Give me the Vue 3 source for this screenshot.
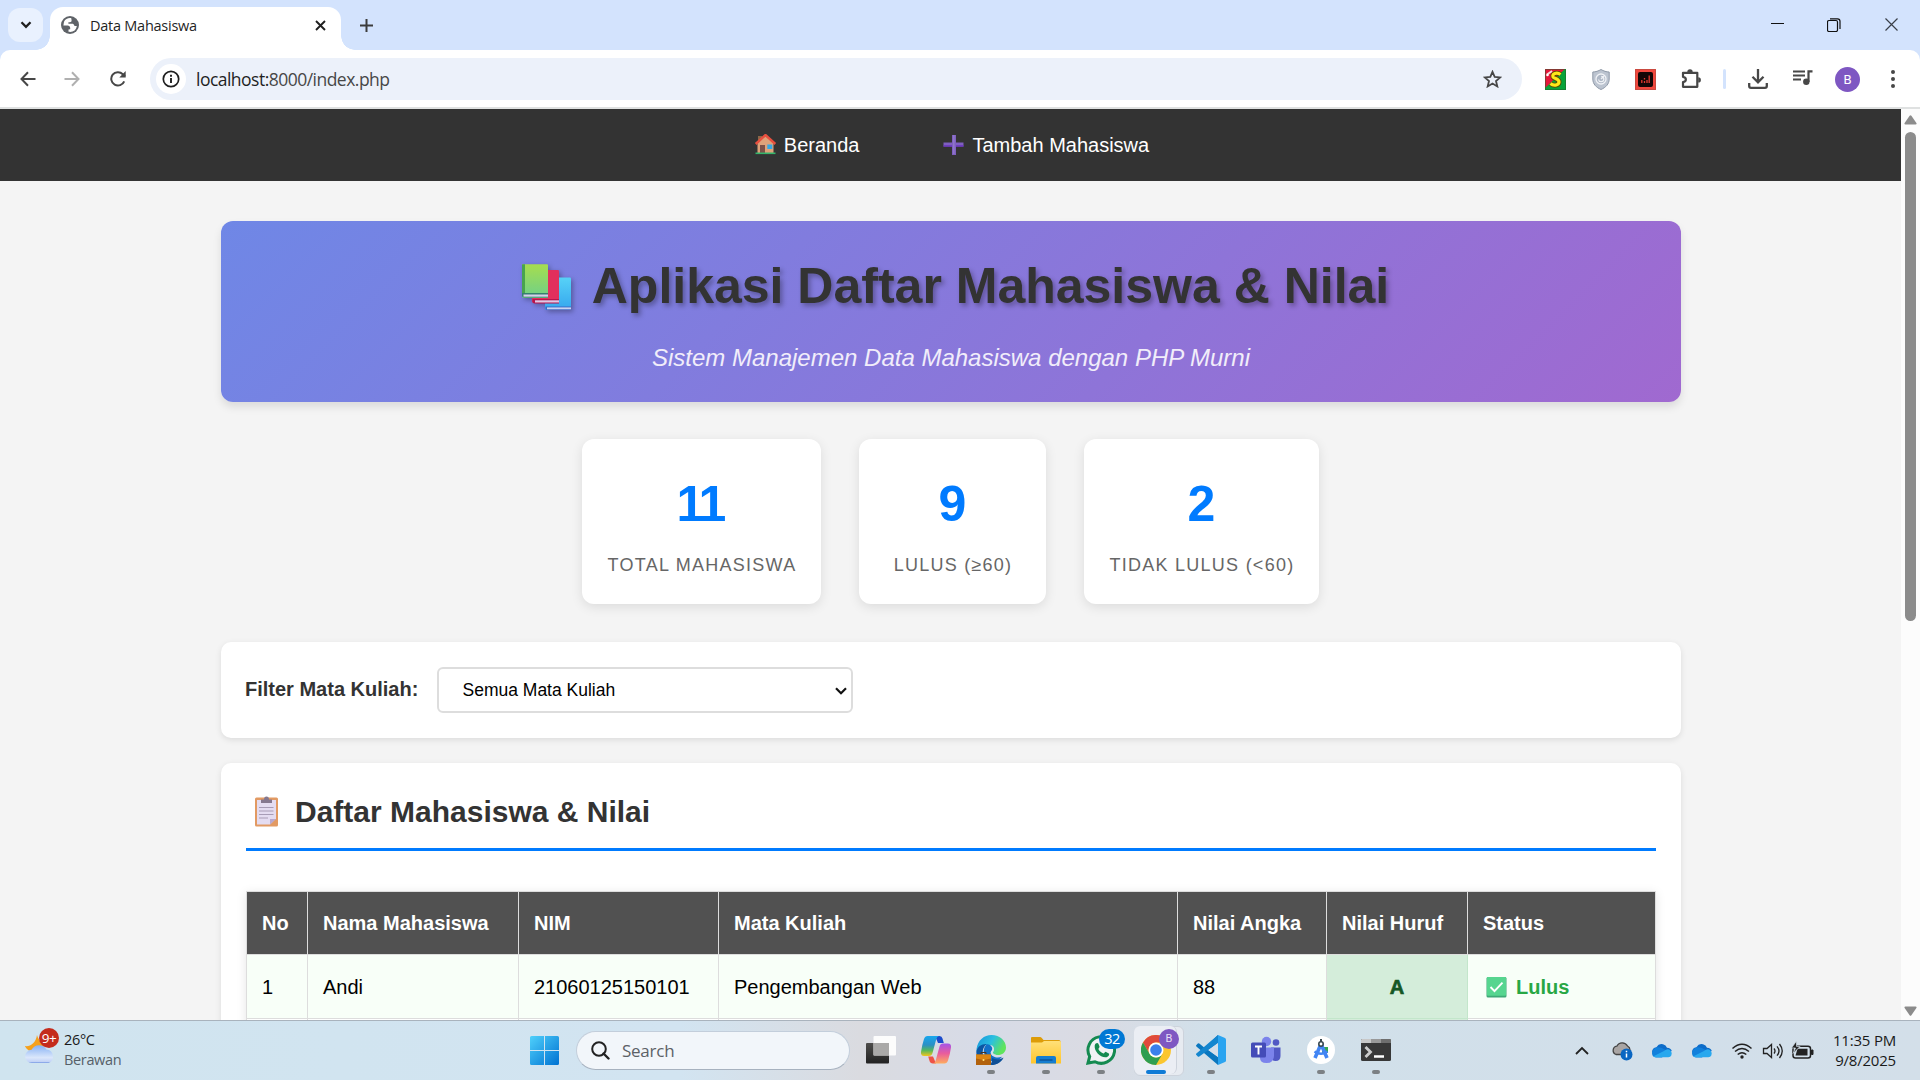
<script setup>
import { ref } from 'vue'

const columns = ['No', 'Nama Mahasiswa', 'NIM', 'Mata Kuliah', 'Nilai Angka', 'Nilai Huruf', 'Status']
const rows = [{ no: 1, nama: 'Andi', nim: '21060125150101', mk: 'Pengembangan Web', angka: 88, huruf: 'A', status: 'Lulus' }]
const stats = [
  { value: 11, label: 'Total Mahasiswa', width: 239 },
  { value: 9, label: 'Lulus (≥60)', width: 187 },
  { value: 2, label: 'Tidak Lulus (<60)', width: 235 },
]
const filter = ref('')
</script>

<template>
  <div class="desktop">
    <header class="tabstrip">
      <button class="tab-search">
        <svg width="12" height="8" viewBox="0 0 12 8"><path d="M1.5 1.3 6 5.8l4.500-4.500" fill="none" stroke="#1f1f1f" stroke-width="2.300" /></svg>
      </button>
      <div class="tab">
        <svg class="globe" width="18" height="18" viewBox="0 0 18 18">
          <circle cx="9" cy="9" r="9" fill="#5f6368" />
          <path d="M10.300 2.200C7.500 1.600 4.300 3 3 5.700l-.6 3.800h4.200c1.500 0 2.600 1 2.600 2.400v1.300l-1.700.2v2.400c4.200.8 7.800-1.500 8.300-5.800h-2.300c-.4-1.600-1.300-2.200-2.700-2.200H7.400V6.200h1.500c1.200 0 1.700-.6 1.700-1.700z" fill="#fff" />
        </svg>
        <span class="tab-title">Data Mahasiswa</span>
        <svg class="tab-close" width="11" height="11" viewBox="0 0 11 11"><path d="M1 1l9 9M10 1l-9 9" stroke="#1f1f1f" stroke-width="1.900" /></svg>
      </div>
      <svg class="new-tab" width="13" height="13" viewBox="0 0 13 13"><path d="M6.500 0v13M0 6.500h13" stroke="#3c3c3c" stroke-width="2" /></svg>
      <div class="win-buttons">
        <svg width="13" height="13" viewBox="0 0 13 13"><path d="M0 5.500h13" stroke="#111" /></svg>
        <svg width="14" height="14" viewBox="0 0 14 14" fill="none" stroke="#111"><rect x=".5" y="2.500" width="10" height="11" rx="1.500" stroke-width="1.200" /><path d="M3 .8h7.500q2.500 0 2.500 2.500V11" stroke-width="1.200" /></svg>
        <svg width="13" height="13" viewBox="0 0 13 13"><path d="M.5.5l12 12M12.500.5l-12 12" stroke="#3a3f48" stroke-width="1.200" /></svg>
      </div>
    </header>

    <div class="toolbar">
      <div class="nav-btn"><svg width="16" height="16" viewBox="0 0 16 16" fill="none" stroke="#474747" stroke-width="2"><path d="M15.500 8H2M8 1.300 1.500 8 8 14.700" /></svg></div>
      <div class="nav-btn"><svg width="16" height="16" viewBox="0 0 16 16" fill="none" stroke="#b0b0b0" stroke-width="2"><path d="M.5 8H14M8 1.300 14.500 8 8 14.700" /></svg></div>
      <div class="nav-btn reload"><svg width="16" height="16" viewBox="0 0 16 16"><path d="M14.200 10.300A6.700 6.700 0 1 1 12.800 3.200L15 5.400" fill="none" stroke="#474747" stroke-width="2" /><path d="M15.700 0v6.500H9.300z" fill="#474747" /></svg></div>
      <div class="omnibox">
        <span class="site-info">
          <svg width="18" height="18" viewBox="0 0 18 18"><circle cx="9" cy="9" r="7.700" fill="none" stroke="#1f1f1f" stroke-width="1.700" /><path d="M9 8v5M9 4.800v1.900" stroke="#1f1f1f" stroke-width="1.900" /></svg>
        </span>
        <span class="url"><b>localhost:</b>8000/index.php</span>
        <svg class="star" width="19" height="18" viewBox="0 0 19 18"><path d="M9.500 1.800l2.200 5.100 5.500.5-4.200 3.600 1.300 5.400-4.800-2.900-4.800 2.900L6 11 1.800 7.400l5.500-.5z" fill="none" stroke="#474747" stroke-width="1.800" /></svg>
      </div>
      <div class="ext">
        <svg width="21" height="21" viewBox="0 0 21 21">
          <path d="M0 0h21v21H0z" fill="#08a33a" /><path d="M0 0h20L0 19z" fill="#e5173a" />
          <path d="M15.500 5.500C12 3 6.800 4.500 8 7.800c.8 2 6.500 2 6 5.500-.4 3-5.500 4-8.500 1.200" fill="none" stroke="#5b4b00" stroke-width="5" />
          <path d="M15.500 5.500C12 3 6.800 4.500 8 7.800c.8 2 6.500 2 6 5.500-.4 3-5.500 4-8.500 1.200" fill="none" stroke="#ffe81a" stroke-width="3.200" />
          <path d="M2 5.500l5-3.500" stroke="#f3dede" stroke-width="2" /><circle cx="2.500" cy="6" r="1.300" fill="#fff" />
          <path d="M.5.500h20v20H.5z" fill="none" stroke="#245c2b" stroke-opacity=".5" />
        </svg>
      </div>
      <div class="ext">
        <svg width="18" height="21" viewBox="0 0 18 21">
          <path d="M9 .5C6.500 2 3.500 3 .8 3v7c0 5 3.500 8.500 8.200 10.500 4.700-2 8.200-5.500 8.200-10.500V3C14.500 3 11.500 2 9 .5z" fill="#bcc4d0" stroke="#8f99a8" />
          <circle cx="9" cy="10" r="5" fill="#aeb7c5" stroke="#f0f2f6" stroke-width="1.300" /><path d="M6.500 10.500a2.700 2.700 0 1 0 2.700-3.200M9 10l3-3" stroke="#eef1f5" fill="none" stroke-width="1.300" />
        </svg>
      </div>
      <div class="ext">
        <svg width="21" height="21" viewBox="0 0 21 21"><path d="M0 0h21v21H0z" fill="#f0483e" /><path d="M.5.5h20v20H.5z" fill="none" stroke="#c94a40" /><rect x="3" y="3" width="15" height="15" rx="2" fill="#120606" /><path d="M6.800 11v3M9.500 12v2M9.500 9v1.500M12 11v3M14.200 6.500V14" stroke="#e0392f" stroke-width="1.300" /></svg>
      </div>
      <div class="ext puzzle">
        <svg width="21" height="21" viewBox="0 0 21 21"><path d="M2 3.800h14.300v14H2v-4.600c3.800-.6 3.800-4.800 0-5.400z" fill="none" stroke="#474747" stroke-width="2.200" stroke-linejoin="round" /><path d="M6.300 3a2.700 2.700 0 0 1 5.400 0zM17.200 8.200a2.700 2.700 0 0 1 0 5.400z" fill="#474747" /></svg>
      </div>
      <div class="divider"><i></i></div>
      <div class="ext"><svg width="20" height="20" viewBox="0 0 20 20" fill="none" stroke="#474747" stroke-width="2.300"><path d="M10 0v13M4.500 7.800l5.500 5.500 5.500-5.500M1.200 14v3q0 1.800 1.800 1.800h14q1.800 0 1.800-1.800v-3" /></svg></div>
      <div class="ext queue"><svg width="20" height="15" viewBox="0 0 20 15"><path d="M0 1.500h12M0 5.500h12M0 9.500h8" stroke="#474747" stroke-width="2" /><path d="M15.500 12V1.300h4" stroke="#474747" stroke-width="2.200" fill="none" /><circle cx="13.300" cy="11.700" r="3.200" fill="#474747" /></svg></div>
      <div class="ext"><span class="avatar">B</span></div>
      <div class="ext"><svg width="4" height="18" viewBox="0 0 4 18" fill="#474747"><circle cx="2" cy="2" r="2" /><circle cx="2" cy="9" r="2" /><circle cx="2" cy="16" r="2" /></svg></div>
    </div>

    <div class="viewport">
      <div class="page">
        <nav class="menu">
          <a>
            <svg width="27" height="22" viewBox="0 0 27 22">
              <path d="M6 2h4v6H6z" fill="#8b6648" /><path d="M5.500 9 13.500 2l8 7v10.500h-16z" fill="#dfa27a" />
              <path d="M3.700 10 13.500 1l9.800 9" fill="none" stroke="#e8503f" stroke-width="2.400" />
              <path d="M8 11h5v8.500H8z" fill="#7d5148" /><path d="M15.300 10.500h5V15h-5z" fill="#35a7e4" /><path d="M3.500 18.500h20v1.600h-20z" fill="#35b56c" />
            </svg>Beranda</a>
          <a>
            <svg width="27" height="22" viewBox="0 0 27 22">
              <path d="M12 1h4v7.500h7.500v4H16V21h-4v-8.500H3.500v-4H12z" fill="#7f5fc0" /><path d="M3.500 11.200H12v1.500H3.500zM16 11.200h7.500v1.500H16z" fill="#6a35bd" /><path d="M13 1h1.600v19H13z" fill="#9a86cf" opacity=".6" />
            </svg>Tambah Mahasiswa</a>
        </nav>
        <main>
          <section class="hero">
            <h1>
              <svg width="65" height="56" viewBox="0 0 65 56">
                <defs>
                  <linearGradient id="bookG" x2="0" y2="1"><stop stop-color="#a6dd4e" /><stop offset="1" stop-color="#6ed08a" /></linearGradient>
                  <linearGradient id="bookB" x2="0" y2="1"><stop stop-color="#57d2f7" /><stop offset="1" stop-color="#35a6ee" /></linearGradient>
                </defs>
                <path d="M32 16.500h25q1 0 1 1V49H34q-2 0-2-2z" fill="url(#bookB)" /><path d="M32.500 45.500H58V49H34.500q-2 0-2-1.500z" fill="#3c67c4" /><path d="M34 46.400h24v1.900H34z" fill="#c9d3f2" />
                <path d="M20 9h25q1 0 1 1v32H21q-2 0-2-2z" fill="#e22f5c" /><path d="M19.500 38H46v4.500H21.500q-2 0-2-2z" fill="#b9134a" /><path d="M22 39.300h24v2.200H22z" fill="#dfc8e6" />
                <path d="M9 4q0-.7.700-.7H34q1 0 1 1V37H11q-2 0-2-2z" fill="url(#bookG)" /><path d="M9 4q0-.7.700-.7H12V33L9 35z" fill="#48a34e" /><path d="M9 32h26v4.500H11q-2 0-2-2z" fill="#36806f" /><path d="M10.500 33.500H35v2.200H10.500z" fill="#d6cfea" />
              </svg><span>Aplikasi Daftar Mahasiswa &amp; Nilai</span>
            </h1>
            <p>Sistem Manajemen Data Mahasiswa dengan PHP Murni</p>
          </section>

          <section class="stats">
            <div v-for="s in stats" :key="s.label" class="stat" :style="{ width: s.width + 'px' }">
              <strong :class="{ ones: s.value === 11 }">{{ s.value }}</strong>
              <span>{{ s.label }}</span>
            </div>
          </section>

          <section class="filter">
            <label>Filter Mata Kuliah:</label>
            <div class="select-wrap">
              <select v-model="filter"><option value="">Semua Mata Kuliah</option></select>
              <svg width="12" height="8" viewBox="0 0 12 8"><path d="M1 1.200 6 6.200l5-5" fill="none" stroke="#111" stroke-width="2.200" /></svg>
            </div>
          </section>

          <section class="list">
            <h2>
              <svg width="49" height="34" viewBox="0 0 49 34">
                <rect x="9" y="2.500" width="23" height="29" rx="1.500" fill="#e29a63" />
                <path d="M11 5h19v18.500L24 29.500H11z" fill="#e4dcf1" /><path d="M24 29.500V24h6z" fill="#b9a8cf" />
                <path d="M15 4.500h3q0-3 2.500-3T23 4.500h3V8H15z" fill="#85788f" />
                <path d="M13 12.500h14.500M13 16h14.500M13 19.500h14.500M13 23h9" stroke="#a79cb6" stroke-width="1.200" />
              </svg>Daftar Mahasiswa &amp; Nilai
            </h2>
            <table>
              <colgroup><col class="c1"><col class="c2"><col class="c3"><col class="c4"><col class="c5"><col class="c6"><col class="c7"></colgroup>
              <thead><tr><th v-for="c in columns" :key="c">{{ c }}</th></tr></thead>
              <tbody>
                <tr v-for="r in rows" :key="r.no">
                  <td>{{ r.no }}</td><td>{{ r.nama }}</td><td>{{ r.nim }}</td><td>{{ r.mk }}</td><td>{{ r.angka }}</td>
                  <td class="grade">{{ r.huruf }}</td>
                  <td class="pass">
                    <svg width="33" height="22" viewBox="0 0 33 22"><rect x="3.500" y="1" width="20" height="20.500" rx="1.500" fill="#3fa877" /><rect x="4" y="1" width="19" height="18.700" rx="1" fill="#56d58f" /><path d="M7.500 11l4 4.200 8-8.500" fill="none" stroke="#fff" stroke-width="1.900" /></svg>{{ r.status }}
                  </td>
                </tr>
                <tr class="next"><td v-for="n in 7" :key="n" :class="{ grade: n === 6 }"></td></tr>
              </tbody>
            </table>
          </section>
        </main>
      </div>
      <div class="scrollbar">
        <svg width="13" height="10" viewBox="0 0 13 10"><path d="M5.600.8q.9-1 1.800 0l5 7.200q.7 1.500-.9 1.500h-10Q0 9.500.6 8z" fill="#8b8b8b" /></svg>
        <i></i>
        <svg class="down" width="13" height="10" viewBox="0 0 13 10"><path d="M5.600 9.200q.9 1 1.800 0l5-7.200q.7-1.500-.9-1.500h-10Q0 .5.600 2z" fill="#8b8b8b" /></svg>
      </div>
    </div>

    <footer class="taskbar">
      <div class="weather">
        <div class="weather-icon">
          <svg width="30" height="30" viewBox="0 0 30 30">
            <defs><linearGradient id="cloud" x2="0" y2="1"><stop stop-color="#86b1f4" /><stop offset=".7" stop-color="#dbe7fb" /><stop offset=".92" stop-color="#c3d3f6" /><stop offset="1" stop-color="#6f93e2" /></linearGradient></defs>
            <path d="M12 1c1 4 4 8 9 9l-7 8C8 19 2 17 0 12c5 1 11-3 12-11z" fill="#f5a11c" />
            <path d="M7 29a6.500 6.500 0 0 1-.5-13.200A8.500 8.500 0 0 1 21.500 15.500a7 7 0 0 1 2 13.500z" fill="url(#cloud)" />
          </svg>
          <b>9+</b>
        </div>
        <div class="weather-text"><span>26°C</span><span>Berawan</span></div>
      </div>

      <div class="start">
        <svg width="29" height="29" viewBox="0 0 29 29">
          <defs><linearGradient id="win" x2="1" y2="1"><stop stop-color="#4fd0fb" /><stop offset="1" stop-color="#0072d2" /></linearGradient></defs>
          <path d="M1.500 0H14v14H0V1.500Q0 0 1.500 0zM15 0h12.500Q29 0 29 1.500V14H15zM0 15h14v14H1.500Q0 29 0 27.500zM15 15h14v12.500q0 1.500-1.500 1.500H15z" fill="url(#win)" />
        </svg>
      </div>
      <div class="search">
        <svg width="19" height="19" viewBox="0 0 19 19"><circle cx="8" cy="8" r="6.800" fill="none" stroke="#222" stroke-width="2" /><path d="M12.500 12.500l5 5" stroke="#222" stroke-width="2.400" stroke-linecap="round" /></svg>
        <span>Search</span>
      </div>

      <div class="apps">
        <div class="app">
          <svg width="30" height="30" viewBox="0 0 30 30"><defs><linearGradient id="tvd" x2="0" y2="1"><stop stop-color="#4e4d4b" /><stop offset="1" stop-color="#222" /></linearGradient></defs><rect x="0" y="8" width="23" height="20.500" rx="1" fill="url(#tvd)" /><rect x="7.500" y="1" width="22.500" height="19.500" rx="1" fill="#fff" opacity=".9" /><path d="M7.500 8H23v12.500H7.500z" fill="#aaa9a8" /></svg>
        </div>
        <div class="app">
          <svg width="30" height="28" viewBox="0 0 30 28">
            <defs>
              <linearGradient id="cpl" x2="0" y2="1"><stop stop-color="#18a7ee" /><stop offset=".45" stop-color="#2b8fc5" /><stop offset=".72" stop-color="#55b85c" /><stop offset="1" stop-color="#f2c51c" /></linearGradient>
              <linearGradient id="cpr" x2="0" y2="1"><stop stop-color="#a553e8" /><stop offset=".5" stop-color="#e95d9c" /><stop offset="1" stop-color="#ffac5e" /></linearGradient>
            </defs>
            <path d="M14 0h4.500q2.500 0 3 2.500L22.800 7H17z" fill="#1b4bcb" />
            <path d="M7.200 20.500H12l3 7h-3q-3 0-3.600-3z" fill="#ee5347" />
            <path d="M6.500 0H18q-2 .5-2.700 3l-3.800 14q-.8 3-3.500 3H3q-3.500 0-3-4Q1 9 3 3 4 0 6.500 0z" fill="url(#cpl)" />
            <path d="M23.500 27.500H12q2-.5 2.700-3l3.800-14q.8-3 3.500-3h5q3.500 0 3 4-1 7-3 13-1 3-3.500 3z" fill="url(#cpr)" />
          </svg>
        </div>
        <div class="app run">
          <svg width="30" height="30" viewBox="0 0 30 30">
            <defs><linearGradient id="edge" x2="1" y2=".4"><stop stop-color="#1592dc" /><stop offset=".55" stop-color="#2bbfe0" /><stop offset="1" stop-color="#5fe45c" /></linearGradient></defs>
            <path d="M.5 14C2 5 8 0 15.500 0 24 0 30 6 30 12.500c0 5-4 7.500-8 7.500-3.500 0-5.500-1.300-5-2.700 2.500-4 .5-7.300-3.500-7.300C8 9.500 3 11 .5 17z" fill="url(#edge)" />
            <path d="M.3 17C1 11.500 6 8.500 11 9c-3 2-5 6-4 10.500 1.200 5 6 8.500 12 8l8.500-4.500C25 27.500 20 30 15 30 6 30 0 24 .3 17z" fill="#0b57a4" />
            <path d="M11 9.300c2 0 5 1.200 5.300 4.500 0 2-1.600 2.500-1.300 4.500.3 3.500 6 5.500 11 3.500-3 4.500-9 6-13 3.500C7 21 6 13 11 9.300z" fill="#1270c8" />
            <path d="M17 12.500q1.500 3-.5 5 1.500 3 7 2.700l-2 1.300q-5.500 0-7-3.500.2-1.500 1.500-2.700z" fill="#d4dfea" />
            <path d="M16 23q6 3 11.500-.5Q24 29 16 30z" fill="#0f4f96" />
            <rect y="19.500" width="15" height="10.500" fill="#b2610c" /><path d="M0 19.500h15v4L7.500 25 0 23.500z" fill="#da8513" /><path d="M5 19v-1.500h5V19" stroke="#4b3520" fill="none" /><circle cx="7.500" cy="25" r="1" fill="#ffe177" />
          </svg>
        </div>
        <div class="app run">
          <svg width="30" height="28" viewBox="0 0 30 28">
            <defs><linearGradient id="fold" x2="0" y2="1"><stop stop-color="#ffe07a" /><stop offset="1" stop-color="#ffc52b" /></linearGradient></defs>
            <path d="M0 2q0-1 1-1h8q1 0 2 1.200L12.500 4H28q1.500 0 1.500 1.500V10H0z" fill="#dd9c09" /><path d="M0 6.500h11l2-1.500h15.500Q30 5 30 6.500V27.500H0z" fill="url(#fold)" /><path d="M5 27.500V22q0-2 2-2h16q2 0 2 2v5.500z" fill="#157dd0" /><path d="M8.500 24h13" stroke="#0b4e91" stroke-width="1.300" />
          </svg>
        </div>
        <div class="app run">
          <svg width="30" height="30" viewBox="0 0 30 30"><path d="M2 28l1.700-6.500A13.300 13.300 0 1 1 9 26.700z" fill="#f0f2f4" stroke="#148a50" stroke-width="3" /><path d="M8.700 10.500C9.500 7.500 12 7.500 12.500 9l1 2.500c.3 1-1.300 2-1 2.700 1 2 2.800 3.500 5 4.300.7.200 1.700-2 2.600-1.600l2.700 1.500c1 .6-.2 3.800-3.200 3.900C14 22.500 8 16 8.700 10.500z" fill="#148a50" /></svg>
          <b class="badge">32</b>
        </div>
        <div class="app run active">
          <div class="stack"></div>
          <svg width="30" height="30" viewBox="0 0 30 30"><circle cx="15" cy="15" r="15" fill="#fbc62f" /><path d="M2 7.500A15 15 0 0 1 28 7.500H15a7.500 7.500 0 0 0-6.500 11.200z" fill="#e04a3b" /><path d="M2 7.500l6.500 11.200a7.500 7.500 0 0 0 13 0L15 30A15 15 0 0 1 2 7.500z" fill="#2f9e50" /><circle cx="15" cy="15" r="7.500" fill="#fff" /><circle cx="15" cy="15" r="5.800" fill="#3b80ec" /></svg>
          <b class="profile">B</b>
        </div>
        <div class="app run">
          <svg width="30" height="30" viewBox="0 0 30 30"><path d="M22 0l7 3q1 .5 1 1.500v21q0 1-1 1.500l-7 3z" fill="#2aa4f0" /><path d="M22 0L8.500 12.700 3.300 8.600q-.8-.6-1.500 0L.4 10q-.8.800 0 1.500l21.600 18.500V22L12.300 15 22 8z" fill="#0a77bf" /><path d="M.4 18.500q-.8.700 0 1.500l1.400 1.400q.7.600 1.500 0L22 8V0z" fill="#1486cf" /><path d="M22 8v14l-9.700-7z" fill="#d4dfea" /></svg>
        </div>
        <div class="app">
          <svg width="30" height="28" viewBox="0 0 30 28"><circle cx="25" cy="6.500" r="3.300" fill="#5159c4" /><path d="M20 11.500h9.500V20q0 5-5 5-4 0-4.500-4z" fill="#5159c4" /><circle cx="15.500" cy="5.500" r="4.700" fill="#7b83eb" /><path d="M9 11.500h14V20q-.5 7-7.500 7T9 21z" fill="#7b83eb" /><rect y="6.500" width="15" height="15" rx="1.500" fill="#444cb8" /><path d="M4 10.500h7M7.500 10.500v8" stroke="#fff" stroke-width="1.900" /></svg>
        </div>
        <div class="app run">
          <svg width="30" height="30" viewBox="0 0 30 30"><circle cx="15" cy="15" r="14" fill="#fff" /><path d="M16 12h6v6h-6z" fill="#33a854" /><path d="M15 9 9 23M15 9l6 14" stroke="#4285f4" stroke-width="3.600" /><path d="M8.500 16.500q6.500 4.500 13 0" stroke="#4285f4" stroke-width="2.600" fill="none" /><circle cx="15" cy="9" r="2.200" fill="#fff" stroke="#37474f" stroke-width="1.600" /><path d="M15 4v3" stroke="#37474f" stroke-width="2" /></svg>
        </div>
        <div class="app run">
          <svg width="30" height="24" viewBox="0 0 30 24"><rect y="1" width="30" height="22" rx="1.500" fill="#383838" /><path d="M1 1h9v4H0V2z" fill="#c8c8c8" /><path d="M10 1h10v4H10z" fill="#999" /><path d="M20 1h9l1 1v3H20z" fill="#6e6e6e" /><path d="M4.500 9l5 5-5 5" fill="none" stroke="#ccc" stroke-width="2.800" /><path d="M13 18.500h10" stroke="#fff" stroke-width="2.500" /></svg>
        </div>
      </div>

      <div class="tray">
        <svg class="chev" width="14" height="9" viewBox="0 0 14 9"><path d="M1 8l6-6 6 6" fill="none" stroke="#222" stroke-width="1.800" /></svg>
        <svg width="40" height="20" viewBox="0 0 40 20"><path d="M14 13.500a4.300 4.300 0 0 1 .8-8.300A6 6 0 0 1 25.500 5a4.500 4.500 0 0 1 2.500 4v4.500z" fill="#a9a5a4" stroke="#444" stroke-width="1.300" /><circle cx="24.500" cy="13.500" r="6" fill="#0a66c2" /><path d="M24.500 12.500v4M24.500 9.800v1.500" stroke="#fff" stroke-width="1.500" /></svg>
        <svg v-for="n in 2" :key="n" width="40" height="20" viewBox="0 0 40 20"><path d="M14 14q-5-1-3.600-5 1-2.500 4-2.800Q17 2 21 3.300q3 1 4 3.400 4 .3 4.800 3.300L22 14z" fill="#0d6cc9" /><path d="M15 6.200q4.500-.5 8 2.500l3 2.300-6 5.500h-6q-4-.5-4-4.500 1-5 5-5.800z" fill="#1280dc" /><path d="M11.500 15.200L22 10q3.500-3 6.500-.5 2 2.300.8 5-.8 1.800-3 1.800H14q-1.500 0-2.500-1.100z" fill="#28a8ee" /></svg>
        <svg class="wifi" width="36" height="20" viewBox="0 0 36 20" fill="none" stroke="#222" stroke-width="1.500"><path d="M8.500 7.500q9.500-8.500 19 0M11 10.500q7-6 14 0M13.700 13.500q4.300-3.600 8.600 0" /><circle cx="18" cy="16" r="1.700" fill="#222" stroke="none" /></svg>
        <svg width="27" height="20" viewBox="0 0 27 20" fill="none" stroke="#222" stroke-width="1.300"><path d="M3.500 7.500H7L11.500 3.500v13L7 12.500H3.500zM14 7.500q2 2.500 0 5M17 5.300q4 4.700 0 9.400M19.500 3q5.500 7 0 14" /></svg>
        <svg width="30" height="20" viewBox="0 0 30 20"><rect x="6" y="5.200" width="17.500" height="11.800" rx="2.500" fill="none" stroke="#222" stroke-width="1.500" /><path d="M10.500 7.700h10v6.800h-12z" fill="#222" /><path d="M24.500 9H26v4.500h-1.500z" fill="#222" stroke="#222" /><path d="M9.500 0 4.500 7h4L6 12.500l7-7H9.500z" fill="#222" stroke="#d2dfea" stroke-width=".7" /></svg>
        <div class="clock"><span>11:35 PM</span><span>9/8/2025</span></div>
      </div>
    </footer>
  </div>
</template>

<style>
body { margin: 0; overflow: hidden; }
</style>

<style scoped>
* { box-sizing: border-box; }
svg { display: block; flex: none; }
.desktop { width: 1920px; height: 1080px; display: flex; flex-direction: column; overflow: hidden; background: #d3e3fd; font-family: "Open Sans", "Noto Sans", sans-serif; }

.tabstrip { height: 50px; flex: none; display: flex; align-items: flex-start; }
.tab-search { width: 35px; height: 34px; margin: 8px 7px 0 8px; padding: 0; border: 0; border-radius: 12px; background: #e9f1fe; display: grid; place-items: center; }
.tab { position: relative; width: 291px; height: 43px; margin-top: 7px; padding: 0 15px 0 11px; display: flex; align-items: center; background: #fff; border-radius: 13px 13px 0 0; }
.tab::before, .tab::after { content: ""; position: absolute; bottom: 0; width: 14px; height: 14px; }
.tab::before { left: -14px; background: radial-gradient(circle at 0 0, transparent 13.500px, #fff 14px); }
.tab::after { right: -14px; background: radial-gradient(circle at 100% 0, transparent 13.500px, #fff 14px); }
.globe { margin-bottom: 7px; }
.tab-title { margin: 0 auto 6px 11px; font-size: 14.500px; letter-spacing: -0.25px; color: #1f1f1f; }
.tab-close { margin-bottom: 6px; }
.new-tab { margin: 19px 0 0 19px; }
.win-buttons { display: flex; gap: 43px; margin: 18px 22px 0 auto; }
.win-buttons svg:nth-child(2) { margin-right: 1px; }

.toolbar { height: 59px; flex: none; display: flex; align-items: center; padding: 1px 5px 0 6px; background: #fff; border-bottom: 2px solid #dfe1e1; border-radius: 10px 10px 0 0; }
.nav-btn { width: 44px; display: grid; place-items: center; }
.reload { width: 47px; }
.omnibox { width: 1372px; height: 42px; margin: 0 11px 0 9px; padding: 0 20px 0 6px; display: flex; align-items: center; border-radius: 21px; background: #ecf1fa; }
.site-info { width: 30px; height: 30px; display: grid; place-items: center; border-radius: 50%; background: #fff; }
.url { margin: 0 auto 0 10px; font-size: 17.500px; letter-spacing: -0.520px; color: #474747; }
.url b { font-weight: 400; color: #1f1f1f; }
.ext { width: 45px; display: grid; place-items: center; }
.puzzle { padding-left: 2px; }
.queue { padding-bottom: 3px; }
.divider { width: 22px; display: flex; justify-content: center; }
.divider i { width: 3px; height: 20px; border-radius: 2px; background: #d3e3fd; }
.avatar { width: 25px; height: 25px; border-radius: 50%; background: #7e57c2; color: #fff; font: 13px/25px Roboto, sans-serif; text-align: center; }

.viewport { height: 911px; flex: none; display: flex; overflow: hidden; }
.page { width: 1901px; background: #f4f4f4; font-family: "Liberation Sans", Arial, sans-serif; color: #333; }
.menu { height: 72px; display: flex; justify-content: center; align-items: center; gap: 81px; background: #333; color: #fff; font-size: 20px; }
.menu a { display: flex; align-items: center; gap: 5px; }
main { width: 1460px; margin: 40px 0 0 221px; }
.hero { height: 181px; padding-top: 36px; border-radius: 12px; background: linear-gradient(135deg, #6f87e6 0%, #a069d0 100%); box-shadow: 0 5px 8px rgba(0, 0, 0, .1); text-align: center; }
h1 { margin: 0; height: 57px; display: flex; justify-content: center; align-items: center; font-size: 50px; text-shadow: 2.500px 2.500px 5px rgba(0, 0, 0, .3); }
h1 svg { filter: drop-shadow(2.500px 2.500px 2.500px rgba(0, 0, 0, .3)); margin: 6px 14px 0 0; }
h1 span { white-space: nowrap; }
.hero p { margin: 30px 0 0; font-size: 24px; line-height: 28px; font-style: italic; color: #f1edfa; }

.stats { display: flex; justify-content: center; gap: 38px; margin: 37px 1px 0 0; }
.stat { height: 165px; padding-top: 37px; display: flex; flex-direction: column; align-items: center; border-radius: 12px; background: #fff; box-shadow: 0 3px 12px rgba(0, 0, 0, .1); }
.stat strong { font-size: 50px; line-height: 57px; color: #007bff; }
.stat .ones { margin-left: -3px; letter-spacing: -3px; }
.stat span { margin: 22px 0 0 1px; font-size: 18px; line-height: 21px; letter-spacing: 1.250px; text-transform: uppercase; white-space: nowrap; color: #666; }

.filter { height: 96px; margin-top: 38px; padding: 0 25px; display: flex; align-items: center; border-radius: 10px; background: #fff; box-shadow: 0 2px 6px rgba(0, 0, 0, .1); }
.filter label { width: 192px; margin-left: -1px; padding-bottom: 2px; font-size: 20px; font-weight: 700; }
.select-wrap { position: relative; }
.select-wrap svg { position: absolute; right: 6px; top: 20px; }
select { display: block; width: 416px; height: 46px; padding: 0 23.500px; border: 2px solid #ddd; border-radius: 6px; background: #fff; appearance: none; color: #000; font: 17.500px "Liberation Sans", Arial, sans-serif; }

.list { height: 400px; margin-top: 25px; padding: 25px; border-radius: 10px; background: #fff; box-shadow: 0 2px 6px rgba(0, 0, 0, .1); }
h2 { margin: 0; height: 63px; padding-bottom: 13px; display: flex; align-items: center; border-bottom: 3px solid #007bff; font-size: 30px; }
table { width: 1410px; margin-top: 40px; table-layout: fixed; border-collapse: collapse; color: #000; font-size: 20px; box-shadow: 0 2px 10px rgba(0, 0, 0, .1); }
.c1 { width: 61px; } .c2 { width: 211px; } .c3 { width: 200px; } .c4 { width: 459px; } .c5 { width: 149px; } .c6 { width: 141px; } .c7 { width: 188px; }
th, td { height: 63px; padding: 0 15px; border: 1px solid #ddd; text-align: left; }
th { background: #515151; color: #fff; }
tbody tr { height: 64px; background: #f8fff8; }
tbody td { padding-top: 2px; }
.next { background: #fff; }
td.grade { background: #d4edda; border-color: #c3e6cb; color: #155724; font-weight: 700; text-align: center; -webkit-text-stroke: .7px #155724; }
.pass { color: #28a745; font-weight: 700; }
.pass svg { display: inline-block; vertical-align: -4px; }

.scrollbar { width: 19px; display: flex; flex-direction: column; align-items: center; background: #fcfcfc; padding: 6px 0 4px; }
.scrollbar i { width: 11px; height: 489px; margin-top: 7px; border-radius: 6px; background: #8b8b8b; }
.down { margin-top: auto; }

.taskbar { height: 60px; flex: none; display: flex; align-items: center; border-top: 1px solid #a9b3bd; background: linear-gradient(90deg, #d0e4ef 0, #d2e4f1 680px, #dadbe0 860px, #d7dbe7 980px, #dadbe3 1090px, #d1e0ea 1210px, #d2dfea 1700px, #d3dfe9 100%); }
.weather { width: 517px; padding: 0 0 2px 25px; display: flex; align-items: center; color: #1a1a1a; }
.weather-icon { position: relative; padding-bottom: 1px; }
.weather-icon b { position: absolute; left: 14px; top: -6px; width: 20px; height: 20px; border-radius: 50%; background: #c42b1c; color: #fff; font-size: 13.500px; font-weight: 400; line-height: 20px; text-align: center; letter-spacing: -0.500px; }
.weather-text { display: flex; flex-direction: column; margin-left: 9px; font-size: 14.500px; line-height: 20px; letter-spacing: -0.350px; }
.weather-text span + span { color: #566069; }
.start { width: 59px; padding-left: 13px; }
.search { width: 274px; height: 39px; display: flex; align-items: center; gap: 12px; padding-left: 14px; border: 1px solid #c3cedb; border-bottom-color: #a7b2bf; border-radius: 20px; background: #f2f6fa; color: #5c6166; font-size: 17px; letter-spacing: -0.250px; }
.apps { display: flex; margin-left: 3px; }
.app { position: relative; width: 55px; height: 59px; display: grid; place-items: center; padding-bottom: 1px; }
.app svg { position: relative; }
.run::after { content: ""; position: absolute; left: 24px; bottom: 6px; width: 8px; height: 4px; border-radius: 2px; background: #7c8084; }
.active::before { content: ""; position: absolute; left: 6px; top: 5px; width: 48px; height: 48px; border: 1px solid #cdd3dc; border-radius: 6px; background: #e7ebf1; }
.active::after { left: 18px; width: 20px; background: #0f7bd6; z-index: 3; }
.stack { position: absolute; left: 6px; top: 5px; width: 43px; height: 48px; border-right: 1px solid #cdd3dc; border-radius: 6px; background: #ebeef4; z-index: 1; }
.active svg { z-index: 2; }
.badge, .profile { position: absolute; z-index: 3; color: #fff; text-align: center; font-weight: 400; }
.badge { left: 26px; top: 8px; width: 26px; height: 20px; border-radius: 10px; background: #0078d4; font-size: 14.500px; line-height: 20px; letter-spacing: -0.500px; }
.profile { left: 31px; top: 8px; width: 20px; height: 20px; border-radius: 50%; background: #7e57c2; font: 11px/20px Roboto, sans-serif; color: #e6dcf5; }
.tray { display: flex; align-items: center; margin-left: auto; padding-right: 24px; }
.chev { margin-right: 13px; }
.wifi { margin-left: 2px; }
.clock { width: 79px; padding-bottom: 2px; display: flex; flex-direction: column; align-items: flex-end; font-size: 15px; line-height: 20px; letter-spacing: -0.200px; color: #1a1a1a; }
</style>
